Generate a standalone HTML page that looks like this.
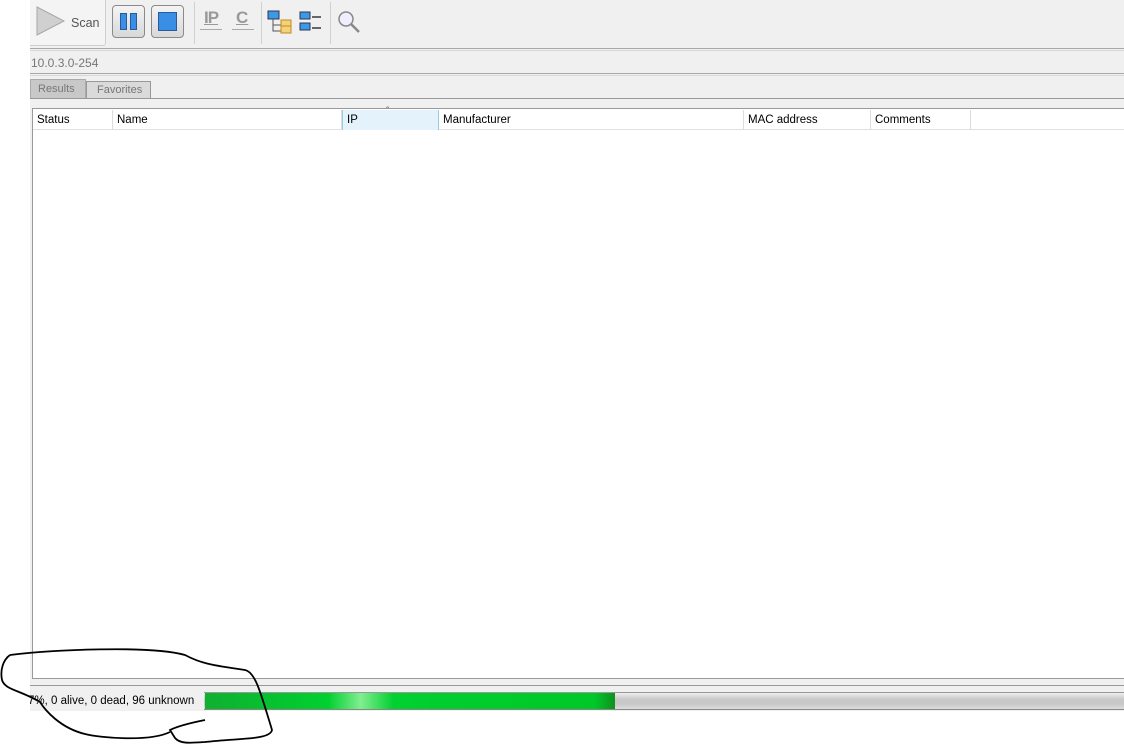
<!DOCTYPE html>
<html><head><meta charset="utf-8"><style>
*{margin:0;padding:0;box-sizing:border-box}
body{width:1124px;height:744px;background:#fff;position:relative;overflow:hidden;font-family:"Liberation Sans","DejaVu Sans",sans-serif;font-size:12px;color:#000}
.a{position:absolute}
.btn{position:absolute;top:5px;width:33px;height:33px;border:1px solid #8a8a8a;border-radius:4px;background:linear-gradient(#f4f4f4,#d8d8d8)}
.hl{position:absolute;left:30px;right:0;height:1px;background:#a8a8a8}
.th{position:absolute;top:110px;height:20px;line-height:20px;padding-left:4px;border-right:1px solid #dcdcdc;font-size:11.5px}
</style></head><body>
<div class="a" style="left:30px;top:0;width:1094px;height:718px;background:#f0f0f0"></div>
<div class="a" style="left:30px;top:0;width:76px;height:46px;border-right:1px solid #cfcfcf;border-bottom:1px solid #cfcfcf;background:#f4f4f4;border-radius:0 0 3px 0"></div>
<svg class="a" style="left:36px;top:6px" width="30" height="30"><polygon points="1,1 28,15 1,29" fill="#d0d0d0" stroke="#a8a8a8"/></svg>
<div class="a" style="left:71px;top:16px;color:#555;font-size:12.5px">Scan</div>
<div class="btn" style="left:112px"><div class="a" style="left:7px;top:7px;width:7px;height:17px;background:#3a8ee6;border:1px solid #2a5a9a"></div><div class="a" style="left:17px;top:7px;width:7px;height:17px;background:#3a8ee6;border:1px solid #2a5a9a"></div></div>
<div class="btn" style="left:151px"><div class="a" style="left:6px;top:6px;width:19px;height:19px;background:#3a8ee6;border:1px solid #2a5a9a"></div></div>
<div class="a" style="left:194px;top:2px;width:1px;height:42px;background:#d0d0d0"></div>
<div class="a" style="left:204px;top:8px;font-size:17px;font-weight:bold;color:#999;text-decoration:underline;letter-spacing:-1px">IP</div>
<div class="a" style="left:200px;top:29px;width:22px;height:1px;background:#aaa"></div>
<div class="a" style="left:236px;top:8px;font-size:17px;font-weight:bold;color:#999;text-decoration:underline">C</div>
<div class="a" style="left:232px;top:29px;width:22px;height:1px;background:#aaa"></div>
<div class="a" style="left:261px;top:2px;width:1px;height:42px;background:#d0d0d0"></div>
<svg class="a" style="left:267px;top:10px" width="60" height="24">
<rect x="1" y="1" width="11" height="8" fill="#3a9ae6" stroke="#335"/><path d="M6 9v12h8M6 15h8" stroke="#555" fill="none"/>
<rect x="14" y="10" width="10" height="7" fill="#f5d27a" stroke="#c08a20"/><rect x="14" y="16" width="10" height="7" fill="#f5d27a" stroke="#c08a20"/>
<rect x="33" y="2" width="10" height="7" fill="#3a9ae6" stroke="#335"/><rect x="33" y="13" width="10" height="7" fill="#3a9ae6" stroke="#335"/>
<path d="M45 7h9M45 18h9" stroke="#666" stroke-width="2"/></svg>
<div class="a" style="left:330px;top:2px;width:1px;height:42px;background:#d0d0d0"></div>
<svg class="a" style="left:336px;top:9px" width="26" height="26"><circle cx="10" cy="10" r="7" fill="#eef" stroke="#888" stroke-width="1.5"/><path d="M15 15l8 8" stroke="#888" stroke-width="2.5"/></svg>
<div class="hl" style="top:48px"></div><div class="hl" style="top:50px;background:#d8d8d8"></div>
<div class="a" style="left:31px;top:56px;color:#777;font-size:12px">10.0.3.0-254</div>
<div class="hl" style="top:73px"></div><div class="hl" style="top:75px;background:#d8d8d8"></div>
<div class="a" style="left:30px;top:79px;width:56px;height:19px;background:#c8c8c8;border:1px solid #aaa;border-bottom:none;color:#777;font-size:11px;padding:3px 0 0 7px">Results</div>
<div class="a" style="left:86px;top:81px;width:65px;height:17px;background:#dadada;border:1px solid #999;border-bottom:none;color:#777;font-size:11px;padding:2px 0 0 10px">Favorites</div>
<div class="hl" style="top:98px;background:#999"></div>
<div class="a" style="left:32px;top:108px;width:1092px;height:571px;background:#fff;border:1px solid #999;border-right:none"></div>
<div class="a" style="left:33px;top:129px;width:1091px;height:1px;background:#e0e0e0"></div>
<div class="th" style="left:33px;width:80px">Status</div>
<div class="th" style="left:113px;width:229px">Name</div>
<div class="th" style="left:342px;width:97px;background:#e4f2fb;border-left:1px solid #9cd;border-right:1px solid #9cd">IP</div>
<div class="a" style="left:386px;top:106px;font-size:10px;color:#666">ˆ</div>
<div class="th" style="left:439px;width:305px">Manufacturer</div>
<div class="th" style="left:744px;width:127px">MAC address</div>
<div class="th" style="left:871px;width:100px">Comments</div>
<div class="hl" style="top:685px;background:#999"></div>
<div class="a" style="left:28px;top:695px;font-size:11.5px">7%, 0 alive, 0 dead, 96 unknown</div>
<div class="a" style="left:204px;top:692px;width:920px;height:18px;border-top:1px solid #999;border-bottom:1px solid #888;background:linear-gradient(#eee,#c8c8c8 40%,#c8c8c8 70%,#ddd)"></div>
<div class="a" style="left:205px;top:693px;width:410px;height:16px;background:linear-gradient(90deg,#10b030,#00d030 30%,#80ee90 38%,#00d030 46%,#00c828 95%,#109020);"></div>
<div class="a" style="left:0;top:711px;width:1124px;height:33px;background:#fff"></div>
<svg class="a" style="left:0;top:0" width="1124" height="744"><path d="M10 655C50 650 150 645 185 655C200 663 210 665 245 670C255 672 260 690 272 730C270 740 240 738 205 742C190 743 180 744 175 738L170 730C180 725 195 722 205 720M170 732C150 742 100 738 85 734C60 728 45 710 40 702C20 690 5 690 2 680C0 670 3 660 10 655" fill="none" stroke="#000" stroke-width="1.8"/></svg>
</body></html>
